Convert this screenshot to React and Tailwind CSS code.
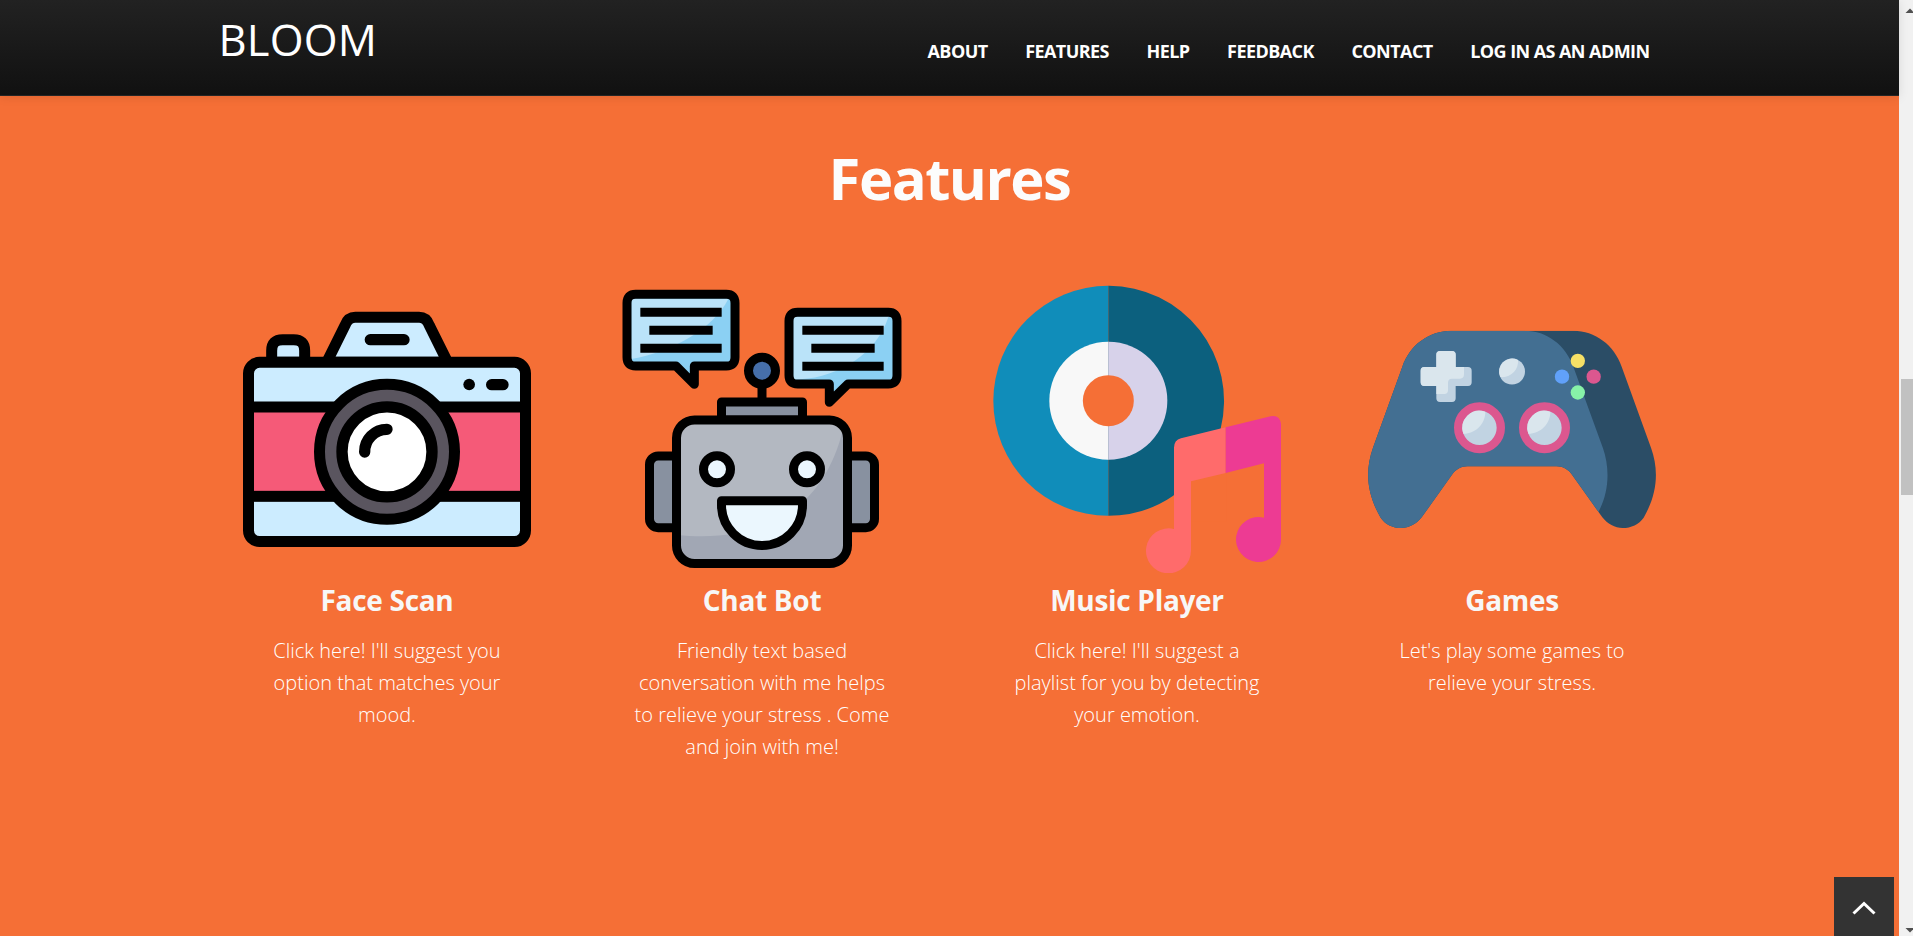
import { useId } from "react";

const NAV = ["About", "Features", "Help", "Feedback", "Contact", "Log in as an admin"];

function CameraIcon() {
  return (
    <svg viewBox="39 -15 864 864" className="block h-72 w-72">
      <path d="M125 217V182Q125 149 158 149H191Q224 149 224 182V217Z" fill="#ccecff" stroke="#000" strokeWidth="33" />
      <path d="M290 217L345 106Q354 82 376 82H567Q589 82 598 106L653 217Z" fill="#ccecff" stroke="#000" strokeWidth="33" />
      <rect x="55.500" y="217" width="831" height="537.500" rx="33" fill="#ccecff" />
      <rect x="55.500" y="351" width="831" height="268" fill="#f55a78" stroke="#000" strokeWidth="33" />
      <rect x="55.500" y="217" width="831" height="537.500" rx="33" fill="none" stroke="#000" strokeWidth="33" />
      <circle cx="471" cy="485.500" r="202.500" fill="#5a555f" stroke="#000" strokeWidth="33" />
      <circle cx="471" cy="485.500" r="135" fill="#fff" stroke="#000" strokeWidth="34" />
      <path d="M404 486A67 67 0 0 1 471 418" fill="none" stroke="#000" strokeWidth="34" strokeLinecap="round" />
      <path d="M421 149H522M785 284H819" stroke="#000" strokeWidth="34" strokeLinecap="round" />
      <circle cx="717.500" cy="283.500" r="17.500" />
    </svg>
  );
}

function ChatBotIcon() {
  return (
    <svg viewBox="24 15 864 864" className="block h-72 w-72" strokeLinejoin="round">
      <path d="M77 43H349Q375 43 375 69V232Q375 258 349 258H253V313L198 258H77Q51 258 51 232V69Q51 43 77 43Z" fill="#8bd0f3" />
      <path d="M64 57H355C310 145 190 215 64 237Z" fill="#bae3f9" />
      <path d="M77 43H349Q375 43 375 69V232Q375 258 349 258H253V313L198 258H77Q51 258 51 232V69Q51 43 77 43Z" fill="none" stroke="#000" strokeWidth="27" />
      <path d="M91 97H335M118 151H308M91 205H335" stroke="#000" strokeWidth="27" />
      <path d="M563 97H835Q861 97 861 123V286Q861 312 835 312H714L658 367V312H563Q537 312 537 286V123Q537 97 563 97Z" fill="#8bd0f3" />
      <path d="M550 111H835C800 220 690 290 570 298H550Z" fill="#bae3f9" />
      <path d="M563 97H835Q861 97 861 123V286Q861 312 835 312H714L658 367V312H563Q537 312 537 286V123Q537 97 563 97Z" fill="none" stroke="#000" strokeWidth="27" />
      <path d="M577 151H821M604 205H794M577 259H821" stroke="#000" strokeWidth="27" />
      <path d="M456 320V366" stroke="#000" strokeWidth="27" />
      <circle cx="456" cy="272" r="40.500" fill="#466faa" stroke="#000" strokeWidth="27" />
      <rect x="334.500" y="366" width="243" height="54" fill="#8891a0" stroke="#000" strokeWidth="27" />
      <rect x="118.500" y="528" width="120" height="215" rx="26" fill="#8891a0" stroke="#000" strokeWidth="27" />
      <rect x="673" y="528" width="120.500" height="215" rx="26" fill="#8891a0" stroke="#000" strokeWidth="27" />
      <rect x="199.500" y="420" width="513" height="430.500" rx="54" fill="#a1a7b4" />
      <path d="M200 474Q200 420 254 420H658Q690 420 699 448C640 690 460 790 200 765Z" fill="#b3b8c1" />
      <rect x="199.500" y="420" width="513" height="430.500" rx="54" fill="none" stroke="#000" strokeWidth="27" />
      <circle cx="321" cy="568" r="40.500" fill="#ebf7fe" stroke="#000" strokeWidth="27" />
      <circle cx="591" cy="568" r="40.500" fill="#ebf7fe" stroke="#000" strokeWidth="27" />
      <path d="M334.500 662H577.500V675A121.500 121.500 0 0 1 334.500 675Z" fill="#ebf7fe" stroke="#000" strokeWidth="27" />
    </svg>
  );
}

function MusicIcon() {
  return (
    <svg viewBox="39 30 864 864" className="block h-72 w-72">
      <path d="M385 32.500A345 345 0 0 0 385 722.500Z" fill="#108dba" />
      <path d="M385 32.500A345.500 345.500 0 0 1 722 461L650 700L582 661A345.500 345.500 0 0 1 385 722.500Z" fill="#0c607e" />
      <path d="M722 461L582 661V740H740V461Z" fill="#f56f36" />
      <path d="M385 200A177 177 0 0 0 385 554Z" fill="#f8f8f8" />
      <path d="M385 200A177 177 0 0 1 385 554Z" fill="#d7d2ea" />
      <circle cx="385" cy="377" r="76.500" fill="#f56f36" />
      <path d="M737 457L603 490Q582 496 582 518V762A67.500 67.500 0 1 0 633 827V619L737 594Z" fill="#ff6b6b" />
      <path d="M737 457L872 424Q900 419 903 448V793A67.500 67.500 0 1 1 852 728V565L737 594Z" fill="#ed3b93" />
    </svg>
  );
}

function GamepadIcon() {
  const clip = useId();
  return (
    <svg viewBox="39 -90 864 864" className="block h-72 w-72">
      <defs>
        <clipPath id={clip}>
          <path d="M290 47H655C720 47 778 90 800 155L888 398C912 465 908 535 866 608C852 628 828 639 803 639C780 639 757 627 742 607L650 478C640 464 624 454 605 454H337C318 454 302 464 292 478L200 607C185 627 162 639 138 639C114 639 90 628 77 608C34 535 30 465 54 398L142 155C164 90 222 47 290 47Z" />
        </clipPath>
      </defs>
      <g clipPath={`url(#${clip})`}>
        <path d="M39 40H910V645H39Z" fill="#2b4d66" />
        <path d="M39 40V645H700L731 590C765 525 763 455 744 400L655 155C632 90 575 47 510 47V40Z" fill="#436f92" />
      </g>
      <path d="M255 108H291Q302 108 302 119V156H339Q350 156 350 167V202Q350 213 339 213H302V250Q302 261 291 261H255Q244 261 244 250V213H208Q197 213 197 202V167Q197 156 208 156H244V119Q244 108 255 108Z" fill="#c1d3e2" />
      <path d="M255 108H291Q302 108 302 119V156H327V178Q327 191 315 191H291Q279 191 279 203V226Q279 237 268 237H244V213H208Q197 213 197 202V167Q197 156 208 156H244V119Q244 108 255 108Z" fill="#dae6ed" />
      <circle cx="471" cy="169.500" r="39" fill="#c1d3e2" />
      <path d="M489 135A39 39 0 0 0 436 186C466 190 492 164 489 135Z" fill="#dae6ed" />
      {[0, 195].map((x) => (
        <g key={x} transform={`translate(${x} 0)`}>
          <circle cx="373.500" cy="338.500" r="64" fill="#c1d3e2" stroke="#dc578f" strokeWidth="25" />
          <path d="M391 290A51.500 51.500 0 0 0 325 356C362 356 391 326 391 290Z" fill="#dae6ed" />
        </g>
      ))}
      <circle cx="668.500" cy="137.500" r="21.500" fill="#f6e066" />
      <circle cx="621" cy="185" r="21.500" fill="#61a1f9" />
      <circle cx="716" cy="185" r="21.500" fill="#dc578f" />
      <circle cx="668.500" cy="232.500" r="21.500" fill="#87f2a8" />
    </svg>
  );
}

const FEATURES = [
  { title: "Face Scan", Icon: CameraIcon, lines: ["Click here! I'll suggest you", "option that matches your", "mood."] },
  { title: "Chat Bot", Icon: ChatBotIcon, lines: ["Friendly text based", "conversation with me helps", "to relieve your stress . Come", "and join with me!"] },
  { title: "Music Player", Icon: MusicIcon, lines: ["Click here! I'll suggest a", "playlist for you by detecting", "your emotion."] },
  { title: "Games", Icon: GamepadIcon, lines: ["Let's play some games to", "relieve your stress."] },
];

function Header() {
  return (
    <header className="z-10 h-24 w-full shrink-0 border-b border-[#252525] bg-linear-to-b from-[#222222] to-[#111111] shadow-[0_1px_10px_rgba(0,0,0,0.1)]">
      <div className="mx-auto flex w-[1460px] items-start justify-between">
        <a className="-ml-px pt-[15px] text-[43.5px] leading-[50px] tracking-[0.2px] text-white">BLOOM</a>
        <nav className="flex gap-[37.6px] pt-[39px] pr-[30px] text-[18px] leading-6 font-bold tracking-[-0.57px] text-white uppercase">
          {NAV.map((item) => (
            <a key={item} className="whitespace-nowrap">{item}</a>
          ))}
        </nav>
      </div>
    </header>
  );
}

function Scrollbar() {
  return (
    <div className="flex w-3.5 shrink-0 flex-col items-end bg-[#f1f1f1]">
      <svg viewBox="0 0 8 17" className="h-[17px] w-2">
        <path d="M0.500 13L5 8.500L9.500 13Z" fill="#505050" />
      </svg>
      <div className="mt-[362px] h-[116px] w-3 bg-[#c1c1c1]" />
      <svg viewBox="0 0 8 17" className="mt-auto h-[17px] w-2">
        <path d="M0.500 9L5 13.500L9.500 9Z" fill="#505050" />
      </svg>
    </div>
  );
}

export default function App() {
  return (
    <div className="relative flex h-[936px] w-[1913px] overflow-hidden font-['Open_Sans',sans-serif]">
      <div className="flex w-[1899px] flex-col bg-[#f56f36]">
        <Header />
        <main className="text-center">
          <h2 className="mt-[42px] text-[58px] leading-[80px] font-bold tracking-[-1.5px] text-[#fcfcfc]">Features</h2>
          <div className="mx-auto mt-[67px] grid w-[1500px] grid-cols-4">
            {FEATURES.map(({ title, Icon, lines }) => (
              <article key={title} className="flex flex-col items-center">
                <Icon />
                <h4 className="mt-[7px] text-[28px] leading-10 font-bold tracking-[-0.3px] text-[#f7f7f7]">{title}</h4>
                <p className="mt-[15px] text-[20px] leading-8 font-light text-white">
                  {lines.map((line) => (
                    <span key={line} className="block whitespace-nowrap">{line}</span>
                  ))}
                </p>
              </article>
            ))}
          </div>
        </main>
      </div>
      <Scrollbar />
      <button className="absolute top-[877px] left-[1834px] flex h-[60px] w-[60px] items-center justify-center bg-[#333333]">
        <svg viewBox="0 0 24 14" className="mt-0.5 h-3.5 w-6" fill="none" stroke="#fff" strokeWidth="3">
          <path d="M1.500 12.500L12 2.500L22.500 12.500" />
        </svg>
      </button>
    </div>
  );
}
